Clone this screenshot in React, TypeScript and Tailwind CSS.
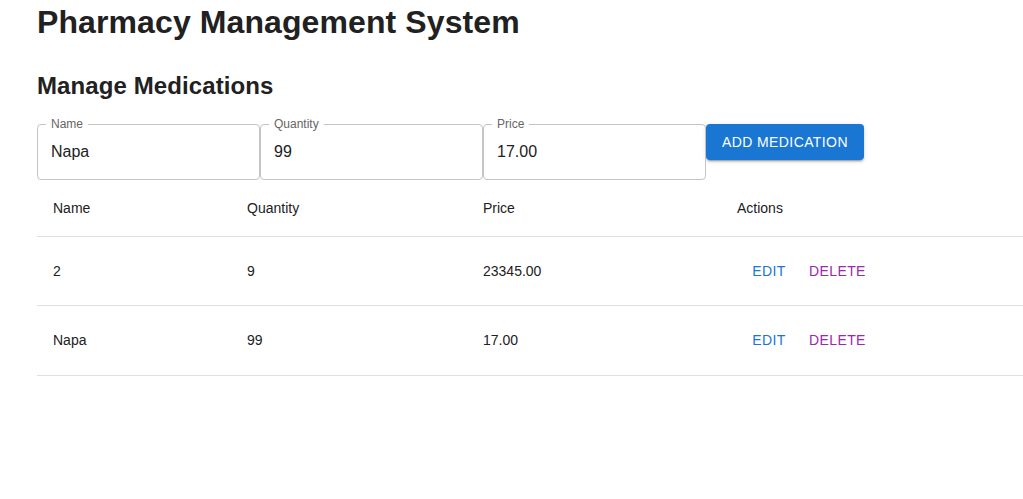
import React from 'react'

const meds = [
  { name: '2', quantity: '9', price: '23345.00' },
  { name: 'Napa', quantity: '99', price: '17.00' },
]

function Field({ label, value }: { label: string; value: string }) {
  return (
    <div className="relative w-[223px] h-[56px] rounded-[4px] border border-[#c4c4c4] flex items-center px-[13px]">
      <span className="absolute left-[8px] -top-[9px] bg-white px-[5px] text-[12px] leading-[16px] text-[#666666]">
        {label}
      </span>
      <span className="text-[16px] text-[#212121]">{value}</span>
    </div>
  )
}

export default function App() {
  return (
    <div className="min-h-screen bg-white pl-[37px] pt-[4px] text-[#212121]" style={{ fontFamily: '"Liberation Sans", Arial, sans-serif' }}>
      <h1 className="text-[32px] font-bold leading-[37px] tracking-[0.1px]">Pharmacy Management System</h1>
      <h2 className="mt-[31px] text-[24px] font-bold leading-[28px] tracking-[0.1px]">Manage Medications</h2>

      <div className="mt-[24px] flex items-start">
        <Field label="Name" value="Napa" />
        <Field label="Quantity" value="99" />
        <Field label="Price" value="17.00" />
        <button className="h-[36px] rounded-[4px] bg-[#1976d2] px-[16px] text-[14px] font-medium uppercase tracking-[0.4px] text-white shadow-[0_3px_1px_-2px_rgba(0,0,0,0.2),0_2px_2px_0_rgba(0,0,0,0.14),0_1px_5px_0_rgba(0,0,0,0.12)]">
          Add Medication
        </button>
      </div>

      <table className="w-full border-collapse text-[14px] text-[#212121]">
        <thead>
          <tr className="h-[56px] border-b border-[#e0e0e0]">
            <th className="w-[194px] px-[16px] pt-[1px] text-left font-normal">Name</th>
            <th className="w-[236px] px-[16px] pt-[1px] text-left font-normal">Quantity</th>
            <th className="w-[254px] px-[16px] pt-[1px] text-left font-normal">Price</th>
            <th className="px-[16px] pt-[1px] text-left font-normal">Actions</th>
          </tr>
        </thead>
        <tbody>
          {meds.map((m) => (
            <tr key={m.name} className="h-[69.5px] border-b border-[#e0e0e0]">
              <td className="px-[16px] pt-[1px]">{m.name}</td>
              <td className="px-[16px] pt-[1px]">{m.quantity}</td>
              <td className="px-[16px] pt-[1px]">{m.price}</td>
              <td className="px-[16px] pt-[1px]">
                <div className="flex">
                  <button className="h-[36px] min-w-[64px] px-[8px] text-[14px] font-medium uppercase tracking-[0.4px] text-[#1976d2]">
                    Edit
                  </button>
                  <button className="h-[36px] min-w-[64px] px-[8px] text-[14px] font-medium uppercase tracking-[0.4px] text-[#9c27b0]">
                    Delete
                  </button>
                </div>
              </td>
            </tr>
          ))}
        </tbody>
      </table>
    </div>
  )
}
